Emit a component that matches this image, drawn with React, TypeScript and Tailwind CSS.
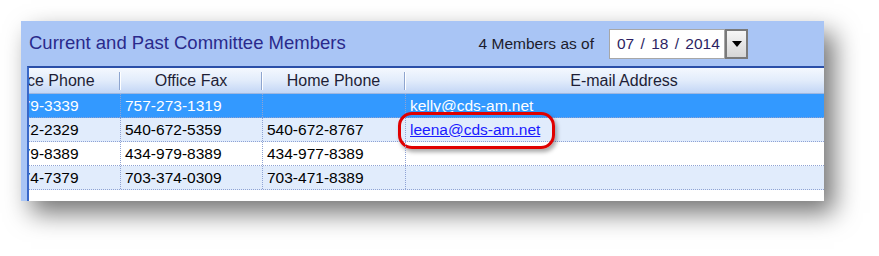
import React from "react";

const cols = [143, 142, 143, 436];

type Row = { a: string; b: string; c: string; d: string; link?: boolean; sel?: boolean };

const rows: Row[] = [
  { a: "434-979-3339", b: "757-273-1319", c: "", d: "kelly@cds-am.net", sel: true },
  { a: "540-672-2329", b: "540-672-5359", c: "540-672-8767", d: "leena@cds-am.net", link: true },
  { a: "434-979-8389", b: "434-979-8389", c: "434-977-8389", d: "" },
  { a: "703-374-7379", b: "703-374-0309", c: "703-471-8389", d: "" },
];

const headers = ["Office Phone", "Office Fax", "Home Phone", "E-mail Address"];

export default function App() {
  return (
    <div
      className="w-[879px] h-[256px] bg-white pl-[21px] pt-[21px]"
      style={{ fontFamily: '"Liberation Sans", Arial, sans-serif' }}
    >
      <div className="w-[803px] h-[180px] bg-[#a9c5f5] flex flex-col shadow-[10px_12px_24px_rgba(0,0,0,0.55)]">
        {/* Title bar */}
        <div className="h-[45px] flex items-center pl-[8px] shrink-0">
          <div className="text-[18.5px] text-[#2a2a8c] leading-none">Current and Past Committee Members</div>
          <div className="ml-auto mr-[76px] flex items-center gap-[15px]">
            <div className="text-[15.5px] text-[#1c1c2c] leading-none">4 Members as of</div>
            <div className="flex h-[30px]">
              <div className="w-[116px] h-[30px] bg-white border border-[#a7a7a7] flex items-center pl-[7px] text-[15.5px] text-[#2d1f63] leading-none whitespace-pre [word-spacing:2px]">
                07 / 18 / 2014
              </div>
              <div className="w-[23px] h-[30px] border-2 border-[#7a7a7a] bg-gradient-to-b from-[#f6f6f6] to-[#d6d6d6] flex items-center justify-center">
                <svg width="10" height="6" viewBox="0 0 10 6">
                  <path d="M0 0 H10 L5 6 Z" fill="#000" />
                </svg>
              </div>
            </div>
          </div>
        </div>

        {/* Grid */}
        <div className="ml-[6px] flex-1 bg-white border-l-2 border-t-2 border-l-[#3a68c8] border-t-[#2a4fa8] overflow-hidden">
          <div className="ml-[-51px] w-[900px]">
            {/* header */}
            <div className="h-[26px] flex bg-gradient-to-b from-[#f4f8fe] via-[#e2ecfb] to-[#c3d6f5] border-b border-[#9fb7e0]">
              {headers.map((h, i) => (
                <div key={h} className="flex items-center shrink-0" style={{ width: cols[i] }}>
                  <div className="flex-1 text-center text-[16px] text-[#1e1e36] leading-none">{h}</div>
                  {i < 3 && <div className="w-[2px] h-[18px] border-l border-[#8ea5cf] border-r border-r-white" />}
                </div>
              ))}
            </div>
            {rows.map((r, ri) => {
              const bg = r.sel ? "bg-[#3399ff] text-white" : ri % 2 === 1 ? "bg-[#e1ecfc] text-black" : "bg-white text-black";
              const vals = [r.a, r.b, r.c, r.d];
              return (
                <div key={ri} className={`h-[24px] flex border-b border-dotted border-[#8fa3d4] ${bg}`}>
                  {vals.map((v, ci) => (
                    <div
                      key={ci}
                      className={`relative shrink-0 h-full flex items-center pl-[4px] text-[15.5px] leading-none ${ci < 3 ? "border-r border-dotted border-[#8fa3d4]" : ""}`}
                      style={{ width: cols[ci] }}
                    >
                      {ci === 3 && r.link ? (
                        <>
                          <span className="text-[#1a1aff] underline">{v}</span>
                          <div className="absolute left-[-8px] top-[-6px] w-[157px] h-[37px] border-[3px] border-[#e00000] rounded-[14px] shadow-[2px_3px_4px_rgba(0,0,0,0.35)]" />
                        </>
                      ) : (
                        <span>{v}</span>
                      )}
                    </div>
                  ))}
                </div>
              );
            })}
          </div>
        </div>
      </div>
    </div>
  );
}
